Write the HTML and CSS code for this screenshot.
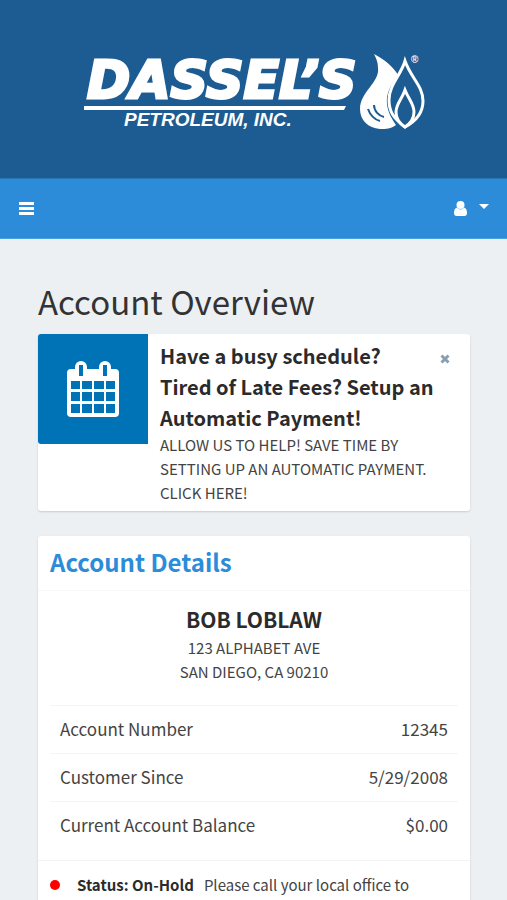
FILE: index.html
```html
<!DOCTYPE html>
<html lang="en">
<head>
<meta charset="utf-8">
<meta name="viewport" content="width=device-width, initial-scale=1">
<title>Account Overview</title>
<link rel="stylesheet" href="styles.css">
</head>
<body>
<header>
  <div class="brand">
    <a href="#" class="logo">
      <svg viewBox="0 0 344 80" role="img" aria-label="Dassel's Petroleum, Inc.">
        <text class="logo-name" x="3" y="46">DASSEL’S</text>
        <path d="M0 54H262L260 58H0Z"/>
        <text class="logo-sub" x="40" y="74">PETROLEUM, INC.</text>
        <path d="M290 2C305 10 312 19 314 23C306 34 302 42 303 52C304 61 308 67 312 73C307 77 302 77 296 77C284 76 276 68 276 57C276 40 296 30 294 16C294 10 292 6 290 2Z"/>
        <path class="drop-mark" d="M290 53C290 59 295 64 300 65M284 57C286 63 291 68 296 69"/>
        <path class="flame" d="M321 9C327 26 339 34 339 49C339 60 334 68 321 75C309 66 305 59 305 48C305 33 317 23 321 9Z"/>
        <path class="flame" d="M321 38C325 48 330 52 330 60C330 66 327 71 321 75C315 71 312 66 312 60C312 52 318 47 321 38Z"/>
        <text class="logo-reg" x="327" y="11">®</text>
      </svg>
    </a>
  </div>
  <nav class="navbar" aria-label="Main">
    <button type="button" class="nav-button" aria-label="Toggle navigation">
      <svg class="bars" viewBox="0 0 15 13"><path d="M0 0h15v3H0zM0 5h15v3H0zM0 10h15v3H0z"/></svg>
    </button>
    <button type="button" class="nav-button" aria-label="User menu">
      <svg class="user" viewBox="0 0 13 15"><circle cx="6.500" cy="4" r="4"/><path d="M3 6.500C1 7 0 9 0 12c0 2 1 3 2.500 3h8C12 15 13 14 13 12c0-3-1-5-3-5.500C8 9 5 9 3 6.500Z"/></svg>
      <svg class="caret" viewBox="0 0 10 5"><path d="M0 0h10L5 5z"/></svg>
    </button>
  </nav>
</header>
<main>
  <h1>Account Overview</h1>
  <section class="card promo">
    <div class="promo-icon">
      <svg viewBox="0 0 52 56" aria-hidden="true">
        <rect x="0" y="8" width="52" height="48" rx="4" fill="#fff"/>
        <rect x="8" y="0" width="12" height="18" rx="6" fill="#fff"/>
        <rect x="32" y="0" width="12" height="18" rx="6" fill="#fff"/>
        <path class="cut" d="M12 4h4v11h-4zM36 4h4v11h-4zM4 20h9v8H4zM15 20h10v8H15zM27 20h10v8H27zM39 20h9v8h-9zM4 31h9v9H4zM15 31h10v9H15zM27 31h10v9H27zM39 31h9v9h-9zM4 43h9v9H4zM15 43h10v9H15zM27 43h10v9H27zM39 43h9v9h-9z"/>
      </svg>
    </div>
    <a href="#" class="promo-text">
      <strong>Have a busy schedule? Tired of Late Fees? Setup an Automatic Payment!</strong>
      <span>ALLOW US TO HELP! SAVE TIME BY SETTING UP AN AUTOMATIC PAYMENT. CLICK HERE!</span>
    </a>
    <button type="button" class="close" aria-label="Close">
      <svg viewBox="0 0 10 10"><path d="M1.500 1.500l7 7M8.500 1.500l-7 7"/></svg>
    </button>
  </section>
  <section class="card">
    <h2>Account Details</h2>
    <div class="details">
      <h3>BOB LOBLAW</h3>
      <address>123 ALPHABET AVE<br>SAN DIEGO, CA 90210</address>
      <table>
        <tbody>
          <tr><th scope="row">Account Number</th><td>12345</td></tr>
          <tr><th scope="row">Customer Since</th><td>5/29/2008</td></tr>
          <tr><th scope="row">Current Account Balance</th><td>$0.00</td></tr>
        </tbody>
      </table>
    </div>
    <div class="status">
      <span class="dot"></span>
      <p><strong>Status: On-Hold</strong>Please call your local office to</p>
    </div>
  </section>
</main>
</body>
</html>
```
FILE: styles.css
```css
* { box-sizing: border-box; }
body {
  margin: 0;
  background: #ecf0f3;
  color: #444;
  font: 15px/24px "Noto Sans CJK SC", "Noto Sans", sans-serif;
}
h1, h2, h3, p { margin: 0; }
a { color: inherit; text-decoration: none; }
svg { display: block; fill: #fff; }
button { padding: 0; border: 0; background: none; cursor: pointer; }

.brand {
  display: flex;
  justify-content: center;
  padding: 52px 14px 46px 18px;
  background: #1c5c92;
}
.logo { width: 344px; }
.logo-name {
  font: italic bold 52px "DejaVu Sans", sans-serif;
  stroke: #fff;
  stroke-width: 3;
}
.logo-sub { font: italic bold 19px "Liberation Sans", sans-serif; }
.logo-reg { font: bold 10px "Liberation Sans", sans-serif; }
.drop-mark { fill: none; stroke: #1c5c92; stroke-width: 2; }
.flame { fill: #1c5c92; stroke: #fff; stroke-width: 3; }

.navbar {
  display: flex;
  justify-content: space-between;
  height: 61px;
  padding: 0 18px 0 19px;
  border-top: 1px solid #2877b5;
  border-bottom: 1px solid #4a9fdf;
  background: #2c8cd9;
}
.nav-button { display: flex; align-items: center; gap: 12px; }
.bars { width: 15px; }
.user { width: 13px; }
.caret { width: 10px; margin-bottom: 4px; }

main { padding: 38px 37px 0 38px; }
h1 {
  margin-bottom: 9px;
  color: #333;
  font-size: 33px;
  font-weight: 400;
  line-height: 48px;
}
.card {
  margin-bottom: 25px;
  border-radius: 3px;
  background: #fff;
  box-shadow: 0 1px 2px rgba(0, 0, 0, .15);
}
.promo { display: flex; align-items: flex-start; }
.promo-icon {
  display: flex;
  flex: none;
  align-items: center;
  justify-content: center;
  width: 110px;
  height: 110px;
  border-radius: 3px 0 0 3px;
  background: #0073b7;
}
.promo-icon svg { width: 52px; }
.cut { fill: #0073b7; }
.promo-text { flex: 1; padding: 6px 4px 6px 12px; }
.promo-text strong {
  display: block;
  color: #2b2b2b;
  font-size: 20px;
  line-height: 31px;
}
.promo-text span { display: block; }
.close { margin: 20px 20px 0 0; }
.close svg { width: 10px; fill: none; stroke: #8b9db0; stroke-width: 3; }

h2 {
  padding: 11px 12px 13px;
  border-bottom: 1px solid #f7f7f7;
  color: #2c8cd9;
  font-size: 24px;
  line-height: 30px;
}
.details { padding: 11px 12px 10px; }
h3 {
  color: #2b2b2b;
  font-size: 21px;
  line-height: 34px;
  text-align: center;
}
address { font-style: normal; text-align: center; }
table {
  width: 100%;
  margin-top: 21px;
  border-collapse: collapse;
  font-size: 17px;
}
th, td { height: 48px; padding: 0 10px 2px; border-top: 1px solid #f4f4f4; }
th { font-weight: 400; text-align: left; }
td { text-align: right; }
.status {
  display: flex;
  align-items: center;
  gap: 17px;
  padding: 12px;
  border-top: 1px solid #f4f4f4;
}
.dot { width: 10px; height: 10px; border-radius: 50%; background: red; }
.status strong { margin-right: 10px; color: #2b2b2b; }
```
